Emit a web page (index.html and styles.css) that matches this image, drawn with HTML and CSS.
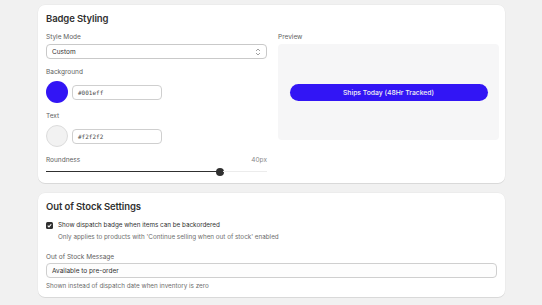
FILE: index.html
```html
<!DOCTYPE html>
<html lang="en">
<head>
    <meta charset="UTF-8">
    <meta name="viewport" content="width=device-width, initial-scale=1.0">
    <title>Badge Settings</title>
    <link rel="stylesheet" href="styles.css">
</head>
<body>

    <!-- Badge Styling -->
    <section class="card">
        <h3>Badge Styling</h3>
        <div class="styling-grid">
            <div class="fields">
                <label class="label">Style Mode</label>
                <div class="select">
                    <span>Custom</span>
                    <svg width="6" height="8" viewBox="0 0 6 8"><path d="M1 3l2-2 2 2M1 5l2 2 2-2" fill="none" stroke="#8a8a8a" stroke-width="0.8"/></svg>
                </div>

                <label class="label">Background</label>
                <div class="color-row">
                    <span class="swatch swatch-bg"></span>
                    <div class="input mono">#001eff</div>
                </div>

                <label class="label">Text</label>
                <div class="color-row">
                    <span class="swatch swatch-text"></span>
                    <div class="input mono">#f2f2f2</div>
                </div>

                <div class="range-head">
                    <span class="label">Roundness</span>
                    <span class="range-value">40px</span>
                </div>
                <div class="range">
                    <div class="range-fill"></div>
                    <div class="range-thumb"></div>
                    <div class="range-rest"></div>
                </div>
            </div>

            <div class="preview-col">
                <label class="label">Preview</label>
                <div class="preview">
                    <div class="badge">Ships Today (48Hr Tracked)</div>
                </div>
            </div>
        </div>
    </section>

    <!-- Out of Stock Settings -->
    <section class="card">
        <h3>Out of Stock Settings</h3>
        <div class="check-row">
            <span class="checkbox">
                <svg width="7" height="7" viewBox="0 0 8 8"><path d="M2 4.2l1.4 1.4L6 2.6" fill="none" stroke="#fff" stroke-width="1.2"/></svg>
            </span>
            <span class="check-label">Show dispatch badge when items can be backordered</span>
        </div>
        <p class="check-help">Only applies to products with 'Continue selling when out of stock' enabled</p>

        <label class="label">Out of Stock Message</label>
        <div class="input wide">Available to pre-order</div>
        <p class="help">Shown instead of dispatch date when inventory is zero</p>
    </section>

</body>
</html>
```

FILE: styles.css
```css
body {
    font-family: 'Inter', 'Noto Sans', sans-serif;
    background-color: #f1f1f1;
    color: #303030;
    margin: 0;
    padding: 5px 37px 0 38px;
}

.card {
    background-color: #fff;
    border-radius: 7px;
    box-shadow: 0 1px 0 rgba(0, 0, 0, 0.08), 0 0 0 0.5px rgba(0, 0, 0, 0.04);
    padding: 8px 8px 7px 8px;
    margin-bottom: 10px;
}

h3 {
    font-size: 9.5px;
    line-height: 11px;
    font-weight: 600;
    margin: 0 0 9px 0;
    letter-spacing: -0.1px;
}

.styling-grid {
    display: grid;
    grid-template-columns: 221px 221px;
    gap: 11px;
}

.fields {
    display: flex;
    flex-direction: column;
}

.label {
    display: block;
    font-size: 6.5px;
    line-height: 8px;
    color: #616161;
    margin-bottom: 3px;
}

.select {
    display: flex;
    justify-content: space-between;
    align-items: center;
    height: 15px;
    box-sizing: border-box;
    border: 0.8px solid #c9c9c9;
    border-radius: 4px;
    padding: 0 5px;
    font-size: 6.5px;
    margin-bottom: 9px;
}

.color-row {
    display: flex;
    align-items: center;
    gap: 4px;
    margin: 2px 0 9px 0;
}

.swatch {
    width: 22px;
    height: 22px;
    border-radius: 50%;
}

.swatch-bg {
    background-color: #3215f5;
}

.swatch-text {
    background-color: #f2f2f2;
    border: 0.6px solid #dcdcdc;
    box-sizing: border-box;
}

.input {
    height: 15px;
    box-sizing: border-box;
    border: 0.8px solid #cfcfcf;
    border-radius: 4px;
    padding: 0 5px;
    font-size: 6.5px;
    display: flex;
    align-items: center;
    width: 90px;
}

.mono {
    font-family: 'DejaVu Sans Mono', monospace;
    font-size: 6px;
    color: #4a4a4a;
}

.range-head {
    display: flex;
    justify-content: space-between;
}

.range-value {
    font-size: 6.5px;
    line-height: 8px;
    color: #8a8a8a;
}

.range {
    display: flex;
    align-items: center;
    height: 9px;
}

.range-fill {
    width: 171px;
    height: 1.5px;
    background-color: #303030;
}

.range-thumb {
    width: 8px;
    height: 8px;
    border-radius: 50%;
    background-color: #303030;
    margin: 0 -1px;
}

.range-rest {
    flex: 1;
    height: 1px;
    background-color: #ececec;
}

.preview {
    background-color: #f6f6f7;
    border-radius: 4px;
    height: 96px;
    margin-top: 1px;
    display: flex;
    align-items: center;
    justify-content: center;
}

.badge {
    width: 198px;
    height: 17px;
    border-radius: 9px;
    background-color: #3215f5;
    color: #f2f2f2;
    font-size: 6.8px;
    font-weight: 500;
    display: flex;
    align-items: center;
    justify-content: center;
}

.check-row {
    display: flex;
    align-items: center;
    gap: 5px;
    margin-top: 1px;
    height: 8px;
}

.checkbox {
    width: 7px;
    height: 7px;
    border-radius: 1.5px;
    background-color: #303030;
    display: flex;
    align-items: center;
    justify-content: center;
}

.check-label {
    font-size: 6.3px;
    line-height: 8px;
}

.check-help {
    font-size: 6.3px;
    line-height: 8px;
    color: #6d6d6d;
    margin: 4px 0 12px 12px;
}

.input.wide {
    width: auto;
    margin-top: -1px;
    background-color: #fdfdfd;
    color: #303030;
}

.help {
    font-size: 6.3px;
    line-height: 8px;
    color: #6d6d6d;
    margin: 4px 0 0 0;
}
```
